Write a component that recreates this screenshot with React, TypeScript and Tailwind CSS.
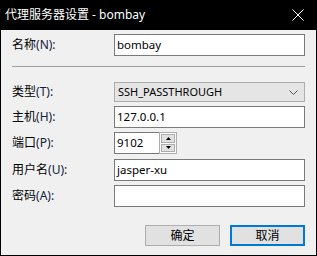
import React from "react";

const font = { fontFamily: '"Noto Sans", "Noto Sans CJK SC", sans-serif' };

function Label({ cn, k }: { cn: string; k: string }) {
  return (
    <div className="w-[102px] shrink-0 text-[12px] leading-none text-black">
      {cn}
      <span className="text-[#10203a]">({k}):</span>
    </div>
  );
}

function TextBox({ value, className = "" }: { value?: string; className?: string }) {
  return (
    <div
      className={`h-[22px] border border-[#7a7a7a] bg-white flex items-center pl-[2px] text-[11.5px] text-black ${className}`}
    >
      {value}
    </div>
  );
}

export default function App() {
  return (
    <div className="w-[317px] h-[256px] flex flex-col bg-black" style={font}>
      <div className="h-[30px] shrink-0 flex items-center justify-between pl-[5px] pr-[13px] text-white text-[12px]">
        <span>代理服务器设置 - bombay</span>
        <svg width="12" height="12" viewBox="0 0 12 12">
          <path d="M0.5 0.5 L11.5 11.5 M11.5 0.5 L0.5 11.5" stroke="white" strokeWidth="1" />
        </svg>
      </div>
      <div className="flex-1 mx-px mb-px bg-[#f0f0f0] flex flex-col px-[11px]">
        <div className="mt-[4px] flex items-center">
          <Label cn="名称" k="N" />
          <TextBox value="bombay" className="flex-1" />
        </div>
        <div className="mt-[10px] h-px bg-[#a0a0a0]" />
        <div className="mt-[15px] flex items-center">
          <Label cn="类型" k="T" />
          <div className="flex-1 h-[20px] border border-[#adadad] bg-[#e5e5e5] flex items-center justify-between pl-[3px] pr-[6px] text-[11px] text-black">
            <span>SSH_PASSTHROUGH</span>
            <svg width="9" height="5" viewBox="0 0 9 5">
              <path d="M0.5 0.5 L4.5 4.5 L8.5 0.5" stroke="#555" strokeWidth="1" fill="none" />
            </svg>
          </div>
        </div>
        <div className="mt-[4px] flex items-center">
          <Label cn="主机" k="H" />
          <TextBox value="127.0.0.1" className="flex-1" />
        </div>
        <div className="mt-[4px] flex items-center">
          <Label cn="端口" k="P" />
          <div className="flex">
            <TextBox value="9102" className="w-[45px] border-r-0" />
            <div className="w-[18px] h-[22px] border border-[#adadad] bg-white flex flex-col p-px gap-px">
              <div className="flex-1 bg-[#e1e1e1] border border-[#adadad] flex items-center justify-center">
                <svg width="5" height="3" viewBox="0 0 5 3">
                  <path d="M0 3 L2.5 0 L5 3 Z" fill="black" />
                </svg>
              </div>
              <div className="flex-1 bg-[#e1e1e1] border border-[#adadad] flex items-center justify-center">
                <svg width="5" height="3" viewBox="0 0 5 3">
                  <path d="M0 0 L2.5 3 L5 0 Z" fill="black" />
                </svg>
              </div>
            </div>
          </div>
        </div>
        <div className="mt-[5px] flex items-center">
          <Label cn="用户名" k="U" />
          <TextBox value="jasper-xu" className="flex-1" />
        </div>
        <div className="mt-[4px] flex items-center">
          <Label cn="密码" k="A" />
          <TextBox className="flex-1" />
        </div>
        <div className="mt-[18px] flex justify-end gap-[10px]">
          <div className="w-[75px] h-[21px] border border-[#adadad] bg-[#e1e1e1] flex items-center justify-center text-[12px] text-black">
            确定
          </div>
          <div className="w-[75px] h-[21px] border-2 border-[#0078d7] bg-[#e1e1e1] flex items-center justify-center text-[12px] text-black">
            取消
          </div>
        </div>
      </div>
    </div>
  );
}
